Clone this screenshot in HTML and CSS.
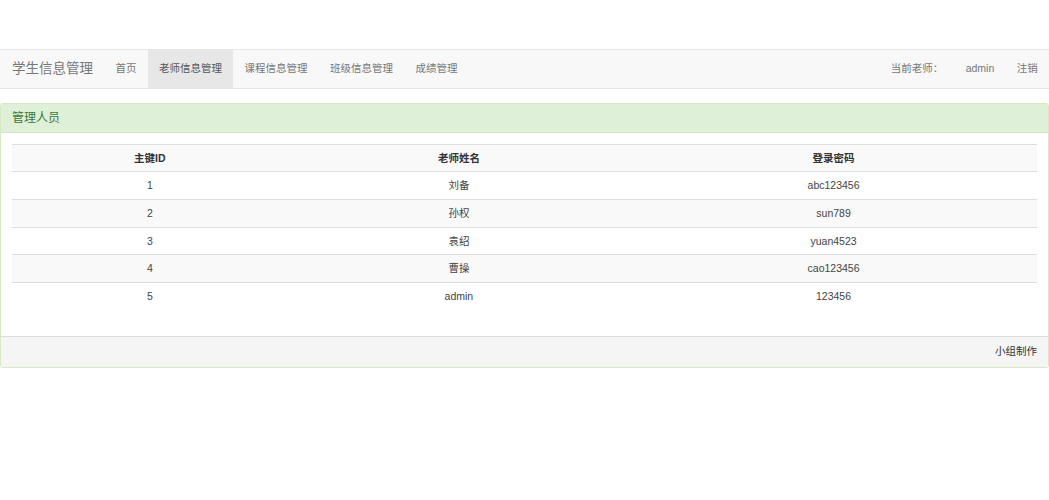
FILE: index.html
```html
<!DOCTYPE html>
<html lang="zh-CN">
<head>
  <meta charset="UTF-8">
  <title>学生信息管理</title>
  <link rel="stylesheet" href="styles.css">
</head>
<body>
  <nav class="navbar">
    <a class="navbar-brand" href="#">学生信息管理</a>
    <ul class="nav">
      <li><a href="#">首页</a></li>
      <li class="active"><a href="#">老师信息管理</a></li>
      <li><a href="#">课程信息管理</a></li>
      <li><a href="#">班级信息管理</a></li>
      <li><a href="#">成绩管理</a></li>
    </ul>
    <ul class="nav nav-right">
      <li><span class="navbar-text">当前老师：</span></li>
      <li><a href="#">admin</a></li>
      <li><a href="#">注销</a></li>
    </ul>
  </nav>

  <div class="panel">
    <div class="panel-heading">管理人员</div>
    <div class="panel-body">
      <table class="table">
        <tbody>
          <tr>
            <th class="col-id">主键ID</th>
            <th class="col-name">老师姓名</th>
            <th>登录密码</th>
          </tr>
          <tr><td>1</td><td>刘备</td><td>abc123456</td></tr>
          <tr><td>2</td><td>孙权</td><td>sun789</td></tr>
          <tr><td>3</td><td>袁绍</td><td>yuan4523</td></tr>
          <tr><td>4</td><td>曹操</td><td>cao123456</td></tr>
          <tr><td>5</td><td>admin</td><td>123456</td></tr>
        </tbody>
      </table>
    </div>
    <div class="panel-footer">小组制作</div>
  </div>
</body>
</html>
```

FILE: styles.css
```css
body {
  font-family: 'Liberation Sans', Arial, 'Noto Sans CJK SC', sans-serif;
  font-size: 10.5px;
  line-height: 15px;
  color: #333;
  background: #fff;
  margin: 0;
  padding-top: 49px;
}

a {
  text-decoration: none;
}

.navbar {
  display: flex;
  align-items: stretch;
  height: 37.5px;
  background-color: #f8f8f8;
  border-top: 1px solid #e7e7e7;
  border-bottom: 1px solid #e7e7e7;
  margin-bottom: 14px;
}

.navbar-brand {
  padding: 11.25px 11.25px 11.25px 12px;
  font-size: 13.5px;
  line-height: 15px;
  color: #777;
}

.nav {
  display: flex;
  list-style: none;
  margin: 0;
  padding: 0;
}

.nav li a {
  display: block;
  padding: 11.25px 11.25px;
  color: #777;
}

.nav li.active a {
  background-color: #e7e7e7;
  color: #555;
}

.nav-right {
  margin-left: auto;
}

.navbar-text {
  display: block;
  margin: 11.25px 11.25px;
  color: #777;
}

.panel {
  border: 1px solid #d6e9c6;
  border-radius: 3px;
  box-shadow: 0 1px 1px rgba(0,0,0,0.05);
}

.panel-heading {
  background-color: #dff0d8;
  color: #3c763d;
  border-bottom: 1px solid #d6e9c6;
  padding: 7px 11px;
  font-size: 12px;
  line-height: 14px;
}

.panel-body {
  padding: 11px 11px 11px;
}

.table {
  width: 100%;
  border-collapse: collapse;
  margin-bottom: 15px;
}

.table th,
.table td {
  padding: 6px;
  line-height: 14.7px;
  border-top: 1px solid #ddd;
  text-align: center;
}

.table td {
  color: #444;
}

.table th {
  font-weight: bold;
  border-bottom: 1px solid #ddd;
}

.table tr:nth-of-type(odd) {
  background-color: #f9f9f9;
}

.col-id { width: 26.9%; }
.col-name { width: 33.4%; }

.panel-footer {
  background-color: #f5f5f5;
  border-top: 1px solid #ddd;
  padding: 7.5px 11px;
  text-align: right;
}
```
